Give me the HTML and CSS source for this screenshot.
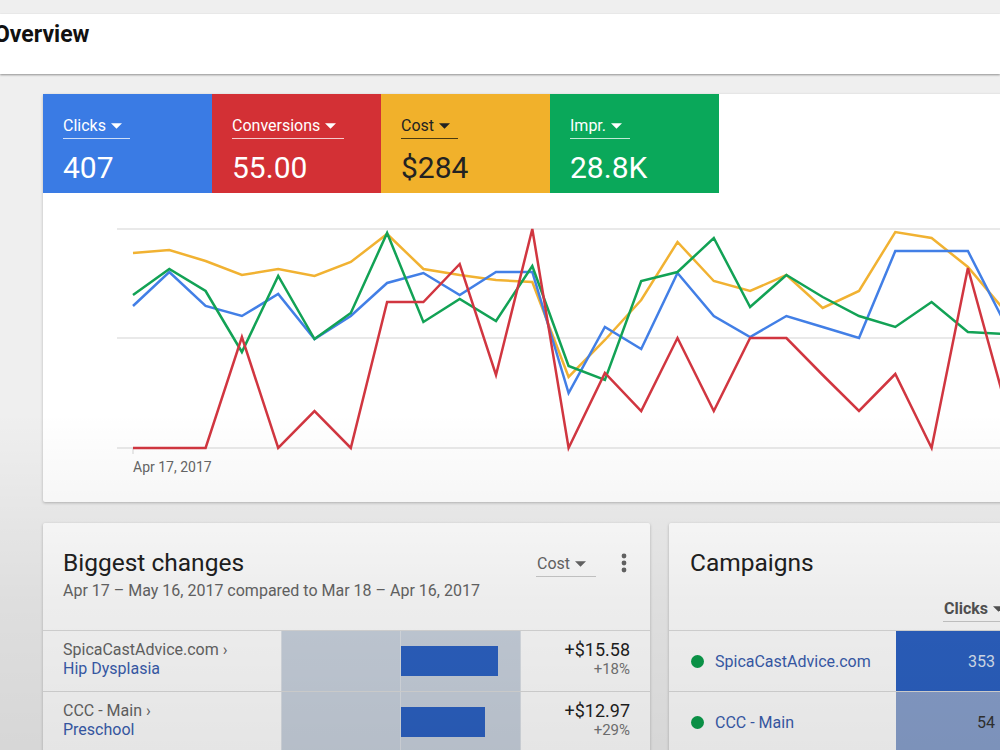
FILE: index.html
```html
<!DOCTYPE html>
<html lang="en">
<head>
    <meta charset="UTF-8">
    <title>Overview</title>
    <link rel="stylesheet" href="styles.css">
</head>
<body>
<div class="topbar">
    <h1 class="page-title">Overview</h1>
</div>

<div class="main">
    <!-- performance chart card -->
    <div class="card chart-card">
        <div class="metrics">
            <div class="metric blue">
                <span class="metric-label">Clicks <svg class="caret" viewBox="0 0 10 5"><path d="M0 0h10L5 5z"/></svg></span>
                <span class="metric-value">407</span>
            </div>
            <div class="metric red">
                <span class="metric-label">Conversions <svg class="caret" viewBox="0 0 10 5"><path d="M0 0h10L5 5z"/></svg></span>
                <span class="metric-value">55.00</span>
            </div>
            <div class="metric yellow">
                <span class="metric-label">Cost <svg class="caret" viewBox="0 0 10 5"><path d="M0 0h10L5 5z"/></svg></span>
                <span class="metric-value">$284</span>
            </div>
            <div class="metric green">
                <span class="metric-label">Impr. <svg class="caret" viewBox="0 0 10 5"><path d="M0 0h10L5 5z"/></svg></span>
                <span class="metric-value">28.8K</span>
            </div>
        </div>
        <svg class="chart" viewBox="43 193 1000 308" width="1000" height="308">
            <line class="grid" x1="117" y1="229" x2="1043" y2="229"/>
            <line class="grid" x1="117" y1="338" x2="1043" y2="338"/>
            <line class="grid" x1="117" y1="448" x2="1043" y2="448"/>
            <line class="grid" x1="133" y1="448" x2="133" y2="454"/>
            <polyline id="line-cost" class="series" stroke="#f1b232"/>
            <polyline id="line-clicks" class="series" stroke="#427fe6"/>
            <polyline id="line-impr" class="series" stroke="#12a255"/>
            <polyline id="line-conv" class="series" stroke="#d13640"/>
            <text class="axis-label" x="133" y="472">Apr 17, 2017</text>
        </svg>
    </div>

    <div class="bottom-row">
        <div class="card changes-card">
            <div class="card-head">
                <div>
                    <h2 class="card-title">Biggest changes</h2>
                    <div class="card-sub">Apr 17 – May 16, 2017 compared to Mar 18 – Apr 16, 2017</div>
                </div>
                <div class="head-tools">
                    <span class="select">Cost <svg class="caret" viewBox="0 0 10 5"><path d="M0 0h10L5 5z"/></svg></span>
                    <svg class="kebab" viewBox="0 0 6 20"><circle cx="3" cy="3" r="2.4"/><circle cx="3" cy="10" r="2.4"/><circle cx="3" cy="17" r="2.4"/></svg>
                </div>
            </div>
            <div class="change-row">
                <div class="change-name">
                    <span class="parent">SpicaCastAdvice.com ›</span>
                    <a class="link">Hip Dysplasia</a>
                </div>
                <div class="bar-cell"></div>
                <div class="bar-cell"><div class="bar" style="width: 97px"></div></div>
                <div class="change-val">
                    <span class="amount">+$15.58</span>
                    <span class="pct">+18%</span>
                </div>
            </div>
            <div class="change-row">
                <div class="change-name">
                    <span class="parent">CCC - Main ›</span>
                    <a class="link">Preschool</a>
                </div>
                <div class="bar-cell"></div>
                <div class="bar-cell"><div class="bar" style="width: 84px"></div></div>
                <div class="change-val">
                    <span class="amount">+$12.97</span>
                    <span class="pct">+29%</span>
                </div>
            </div>
        </div>

        <div class="card campaigns-card">
            <div class="camp-head">
                <h2 class="card-title">Campaigns</h2>
                <div class="camp-cols">
                    <span class="select bold">Clicks <svg class="caret" viewBox="0 0 10 5"><path d="M0 0h10L5 5z"/></svg></span>
                </div>
            </div>
            <div class="camp-row">
                <div class="camp-name"><span class="dot"></span><a class="link">SpicaCastAdvice.com</a></div>
                <div class="camp-val strong">353</div>
            </div>
            <div class="camp-row">
                <div class="camp-name"><span class="dot"></span><a class="link">CCC - Main</a></div>
                <div class="camp-val light">54</div>
            </div>
        </div>
    </div>
</div>

<div class="shade"></div>

<script>
    // daily values, already in chart pixels (y of each point)
    var series = {
        'line-cost':   [253, 250, 261, 275, 269, 276, 262, 234, 269, 275, 280, 282, 377, 340, 300, 242, 281, 291, 275, 308, 291, 232, 238, 267, 310],
        'line-clicks': [306, 272, 306, 316, 294, 339, 316, 283, 273, 295, 272, 272, 393, 327, 349, 273, 316, 337, 316, 327, 338, 251, 251, 251, 322],
        'line-impr':   [295, 269, 291, 352, 276, 339, 313, 233, 322, 299, 321, 266, 366, 380, 281, 272, 238, 307, 275, 297, 316, 327, 302, 332, 334],
        'line-conv':   [448, 448, 448, 337, 448, 411, 448, 302, 302, 264, 375, 229, 448, 373, 411, 338, 411, 338, 338, 375, 411, 374, 448, 268, 400]
    };

    Object.keys(series).forEach(function(id) {
        var pts = series[id].map(function(y, i) {
            return (133 + i * 36.3).toFixed(1) + ',' + y;
        });
        document.getElementById(id).setAttribute('points', pts.join(' '));
    });
</script>
</body>
</html>
```

FILE: styles.css
```css
body {
    margin: 0;
    font-family: Roboto, "Liberation Sans", Arial, sans-serif;
    background: #efefef;
    overflow: hidden;
    height: 750px;
    position: relative;
}
.topbar {
    margin-top: 14px;
    height: 60px;
    box-sizing: border-box;
    padding-top: 7px;
    background: #fff;
    box-shadow: 0 1px 2px rgba(0, 0, 0, 0.4);
}
.page-title {
    margin: 0 0 0 -6px;
    font-size: 23px;
    line-height: 28px;
    font-weight: 700;
    color: #111;
}
.main {
    padding: 20px 0 0 43px;
    width: 1100px;
}
.card {
    background: #fff;
    border-radius: 2px;
    box-shadow: 0 1px 3px rgba(0, 0, 0, 0.25);
}
.chart-card {
    width: 1000px;
    height: 408px;
}
.metrics {
    display: flex;
    height: 99px;
}
.metric {
    width: 169px;
    box-sizing: border-box;
    padding: 22px 20px 0 20px;
    color: #fff;
    display: flex;
    flex-direction: column;
    align-items: flex-start;
}
.blue { background: #3a7be4; }
.red { background: #d33035; }
.yellow { background: #f1b12b; color: #222; }
.green { background: #0aa85a; }
.metric-label {
    font-size: 16px;
    padding: 0 8px 3px 0;
    border-bottom: 1px solid rgba(255, 255, 255, 0.75);
    display: flex;
    align-items: center;
    gap: 5px;
}
.yellow .metric-label {
    border-bottom-color: #4a3a10;
}
.caret {
    width: 11px;
    height: 6px;
    fill: currentColor;
}
.metric-value {
    font-size: 30px;
    margin-top: 11px;
}
.chart {
    display: block;
}
.grid {
    stroke: #e2e2e2;
    stroke-width: 1.5;
}
.series {
    fill: none;
    stroke-width: 2.5;
    stroke-linejoin: miter;
}
.axis-label {
    font-size: 14px;
    fill: #666;
    font-family: Roboto, sans-serif;
}
.bottom-row {
    display: flex;
    gap: 19px;
    margin-top: 21px;
}
.changes-card {
    width: 607px;
    height: 260px;
}
.card-head {
    height: 108px;
    box-sizing: border-box;
    padding: 26px 20px 0 20px;
    display: flex;
    justify-content: space-between;
    border-bottom: 1px solid #ddd;
}
.card-title {
    margin: 0;
    font-size: 24.5px;
    line-height: 28px;
    font-weight: 400;
    color: #212121;
}
.card-sub {
    margin-top: 4px;
    font-size: 16px;
    color: #666;
}
.head-tools {
    display: flex;
    gap: 25px;
    align-items: flex-start;
    padding-top: 5px;
    margin-right: 3px;
}
.select {
    font-size: 16px;
    color: #666;
    display: flex;
    align-items: center;
    gap: 5px;
    padding: 0 10px 3px 1px;
    border-bottom: 1px solid #ccc;
}
.kebab {
    width: 6px;
    height: 20px;
    fill: #666;
    margin-top: -1px;
}
.change-row {
    display: grid;
    grid-template-columns: 238px 119px 120px 1fr;
    height: 60px;
    border-bottom: 1px solid #ddd;
}
.change-name {
    padding: 9px 20px;
    display: flex;
    flex-direction: column;
    font-size: 16px;
}
.parent {
    color: #666;
}
.link {
    color: #3a5eb0;
    font-size: 16px;
}
.bar-cell {
    background: #cad3df;
    border-left: 1px solid #dde2e8;
    display: flex;
    align-items: center;
}
.bar {
    height: 30px;
    background: #2c62c4;
}
.change-val {
    border-left: 1px solid #dde2e8;
    padding: 8px 20px;
    display: flex;
    flex-direction: column;
    align-items: flex-end;
}
.amount {
    font-size: 18px;
    color: #1f1f1f;
}
.pct {
    font-size: 15px;
    color: #777;
}
.campaigns-card {
    width: 400px;
    height: 260px;
}
.camp-head {
    height: 108px;
    box-sizing: border-box;
    padding: 26px 0 0 21px;
    border-bottom: 1px solid #ddd;
    display: flex;
    flex-direction: column;
}
.camp-cols {
    margin-top: 22px;
    padding-left: 253px;
    display: flex;
}
.bold {
    font-weight: 700;
    color: #555;
}
.camp-row {
    display: grid;
    grid-template-columns: 227px 108px;
    height: 60px;
    border-bottom: 1px solid #ddd;
}
.camp-name {
    display: flex;
    align-items: center;
    gap: 11px;
    padding-left: 22px;
}
.dot {
    width: 13px;
    height: 13px;
    border-radius: 50%;
    background: #0b9e4c;
}
.camp-val {
    display: flex;
    align-items: center;
    justify-content: flex-end;
    padding-right: 9px;
    font-size: 16px;
}
.camp-val.strong {
    background: #2c62c4;
    color: #dde6f6;
}
.camp-val.light {
    background: #8aa2cf;
    color: #333;
}
.shade {
    position: absolute;
    left: 0;
    top: 0;
    width: 100%;
    height: 750px;
    pointer-events: none;
    background: linear-gradient(to bottom, rgba(0, 0, 0, 0) 55%, rgba(0, 0, 0, 0.07) 80%, rgba(0, 0, 0, 0.1) 100%);
}
```
